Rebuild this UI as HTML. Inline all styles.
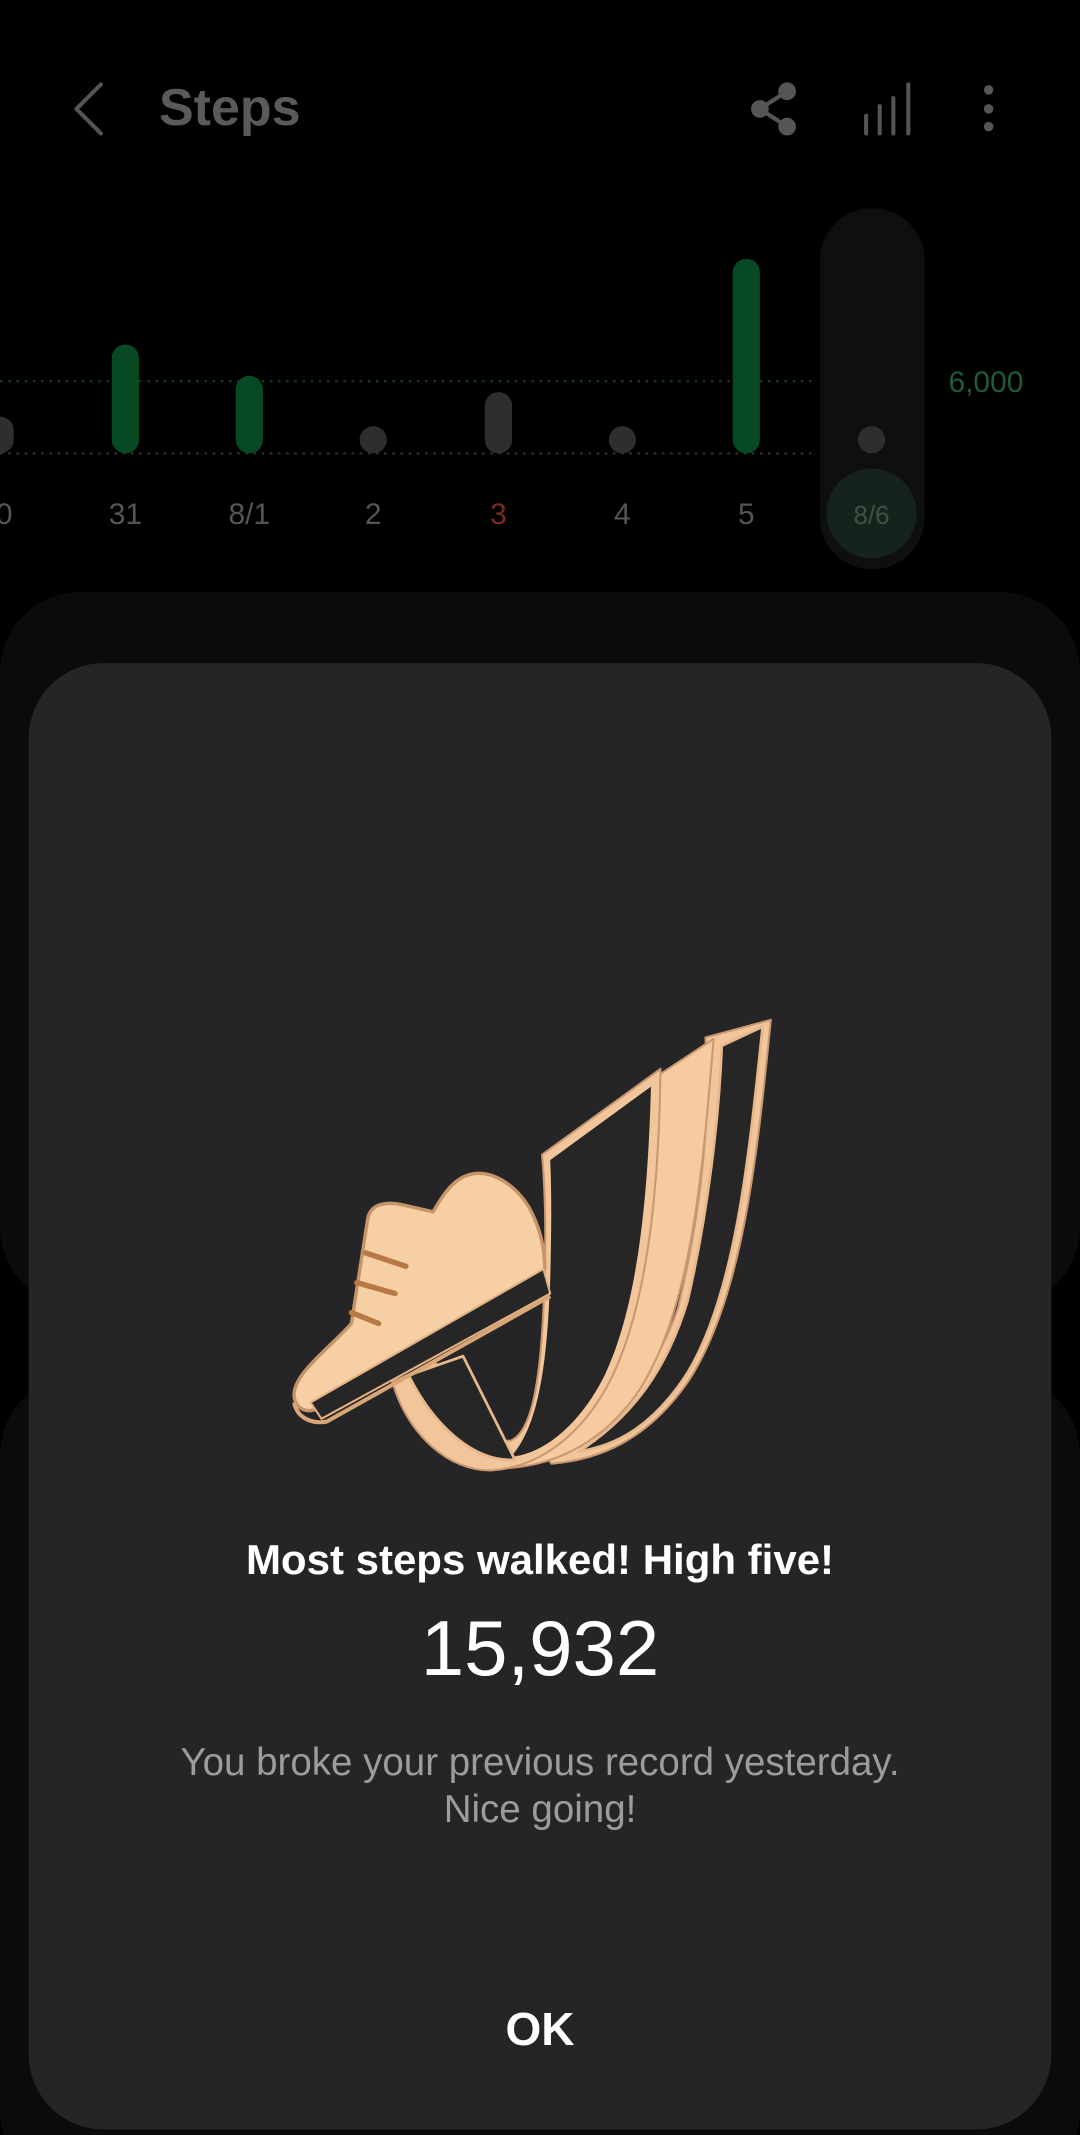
<!DOCTYPE html>
<html><head><meta charset="utf-8"><style>
html,body{margin:0;padding:0;background:#000;}
body{width:1080px;height:2135px;position:relative;overflow:hidden;font-family:"Liberation Sans",sans-serif;}
.t{position:absolute;white-space:nowrap;}
</style></head><body>
<svg width="1080" height="2135" viewBox="0 0 793 1568" style="position:absolute;left:0;top:0">
  <path d="M74,62 L56,80 L74,98" fill="none" stroke="#555" stroke-width="3" stroke-linecap="round" stroke-linejoin="round"/>
  <g fill="#555" stroke="#555" stroke-width="3">
    <circle cx="558" cy="80" r="5"/><circle cx="578" cy="67" r="5"/><circle cx="578" cy="93" r="5"/>
    <line x1="558" y1="80" x2="578" y2="67"/><line x1="558" y1="80" x2="578" y2="93"/>
  </g>
  <g stroke="#555" stroke-width="3" stroke-linecap="round">
    <line x1="636" y1="85" x2="636" y2="98"/><line x1="646" y1="78" x2="646" y2="98"/>
    <line x1="656" y1="72" x2="656" y2="98"/><line x1="667" y1="62" x2="667" y2="98"/>
  </g>
  <g fill="#555"><circle cx="726" cy="66" r="3.5"/><circle cx="726" cy="80" r="3.5"/><circle cx="726" cy="93" r="3.5"/></g>
  <rect x="602" y="153" width="77" height="265" rx="38" fill="#0f0f0f"/>
  <line x1="0" y1="280" x2="600" y2="280" stroke="#1d3d2a" stroke-width="1.5" stroke-dasharray="2 4"/>
  <line x1="0" y1="333" x2="600" y2="333" stroke="#333" stroke-width="1.5" stroke-dasharray="2 4"/>
  <g stroke-linecap="round" stroke-width="20">
    <line x1="0" y1="316" x2="0" y2="323" stroke="#2e2e2e"/>
    <line x1="92" y1="263" x2="92" y2="323" stroke="#064922"/>
    <line x1="183" y1="286" x2="183" y2="323" stroke="#064922"/>
    <line x1="366" y1="298" x2="366" y2="323" stroke="#2e2e2e"/>
    <line x1="548" y1="200" x2="548" y2="323" stroke="#064922"/>
  </g>
  <g fill="#2e2e2e"><circle cx="274" cy="323" r="10"/><circle cx="457" cy="323" r="10"/><circle cx="640" cy="323" r="10"/></g>
  <circle cx="640" cy="377" r="33" fill="#16231c"/>
  <g font-family="Liberation Sans, sans-serif" font-size="22" text-anchor="middle" fill="#555">
    <text x="3" y="385">0</text><text x="92" y="385">31</text><text x="183" y="385">8/1</text>
    <text x="274" y="385">2</text><text x="366" y="385" fill="#7a2a22">3</text><text x="457" y="385">4</text>
    <text x="548" y="385">5</text><text x="640" y="385" font-size="19" fill="#3c5246">8/6</text>
    <text x="724" y="288" fill="#1f5a38">6,000</text>
  </g>
  <rect x="0" y="435" width="793" height="525" rx="58" fill="#0b0b0b"/>
  <rect x="0" y="1010" width="793" height="600" rx="58" fill="#0b0b0b"/>
  <rect x="21" y="487" width="751" height="1077" rx="55" fill="#252527"/>
  <g stroke-linejoin="round">
    <path d="M518,762 L566,749 C556,850 545,955 505,1015 C475,1058 440,1072 405,1075 L395,1062 C440,1050 478,1020 498,960 C515,890 522,820 518,762 Z" fill="#f2c59a" stroke="#c99870" stroke-width="1.5"/>
    <path d="M530,768 L560,754 C550,850 540,950 505,1008 C478,1050 450,1062 425,1066 C465,1040 490,1005 505,955 C520,890 528,820 530,768 Z" fill="#272626" stroke="#e7b88b" stroke-width="2"/>
    <path d="M483,790 L524,763 C516,860 508,960 470,1020 C445,1058 410,1075 375,1078 L365,1066 C410,1055 445,1025 462,965 C476,905 482,840 483,790 Z" fill="#f5cb9f" stroke="#c99870" stroke-width="1.5"/>
    <path d="M398,848 L485,785 C484,860 478,950 450,1010 C428,1055 395,1078 360,1080 C330,1080 300,1055 288,1015 L320,1000 C330,1040 350,1060 375,1058 C395,1050 398,990 400,940 C401,900 400,870 398,848 Z" fill="#f2c59a" stroke="#c99870" stroke-width="1.5"/>
    <path d="M404,852 L478,798 C476,870 470,955 444,1010 C425,1048 398,1068 375,1070 C398,1045 402,990 404,940 C405,900 405,875 404,852 Z" fill="#272626"/>
    <path d="M300,1010 L340,996 L378,1072 C350,1074 320,1050 300,1010 Z" fill="#272626" stroke="#e7b88b" stroke-width="2"/>
    <!-- shoe -->
    <path d="M216,1026 C214,1010 240,992 258,972 L270,895 C272,884 284,882 296,885 L318,890 C326,876 334,864 348,862 C362,860 378,870 388,886 C396,900 400,915 400,932 L234,1034 C225,1039 217,1034 216,1026 Z" fill="#f6cfa5" stroke="#c69467" stroke-width="2.5"/>
    <path d="M228,1030 L399,932 L404,950 L236,1042 Z" fill="#272626" stroke="#e2b184" stroke-width="1.5"/>
    <path d="M216,1030 C218,1042 230,1046 240,1044 L404,952" fill="none" stroke="#d9a675" stroke-width="3"/>
    <g stroke="#b87a45" stroke-width="4" stroke-linecap="round">
      <line x1="268" y1="920" x2="298" y2="930"/><line x1="262" y1="942" x2="290" y2="950"/><line x1="258" y1="964" x2="278" y2="972"/>
    </g>
  </g>
</svg>
<div class="t" style="left:159px;top:78px;font-size:52px;color:#5a5a5a;font-weight:bold;">Steps</div>
<div class="t" style="left:0;width:1080px;text-align:center;top:1535px;font-size:42px;font-weight:bold;color:#fff;line-height:50px;">Most steps walked! High five!</div>
<div class="t" style="left:0;width:1080px;text-align:center;top:1600px;font-size:78px;color:#fff;line-height:96px;">15,932</div>
<div class="t" style="left:0;width:1080px;text-align:center;top:1739px;font-size:38.5px;color:#9c9c9c;line-height:47px;">You broke your previous record yesterday.<br>Nice going!</div>
<div class="t" style="left:0;width:1080px;text-align:center;top:2004px;font-size:46px;font-weight:bold;color:#fff;line-height:50px;">OK</div>
</body></html>
